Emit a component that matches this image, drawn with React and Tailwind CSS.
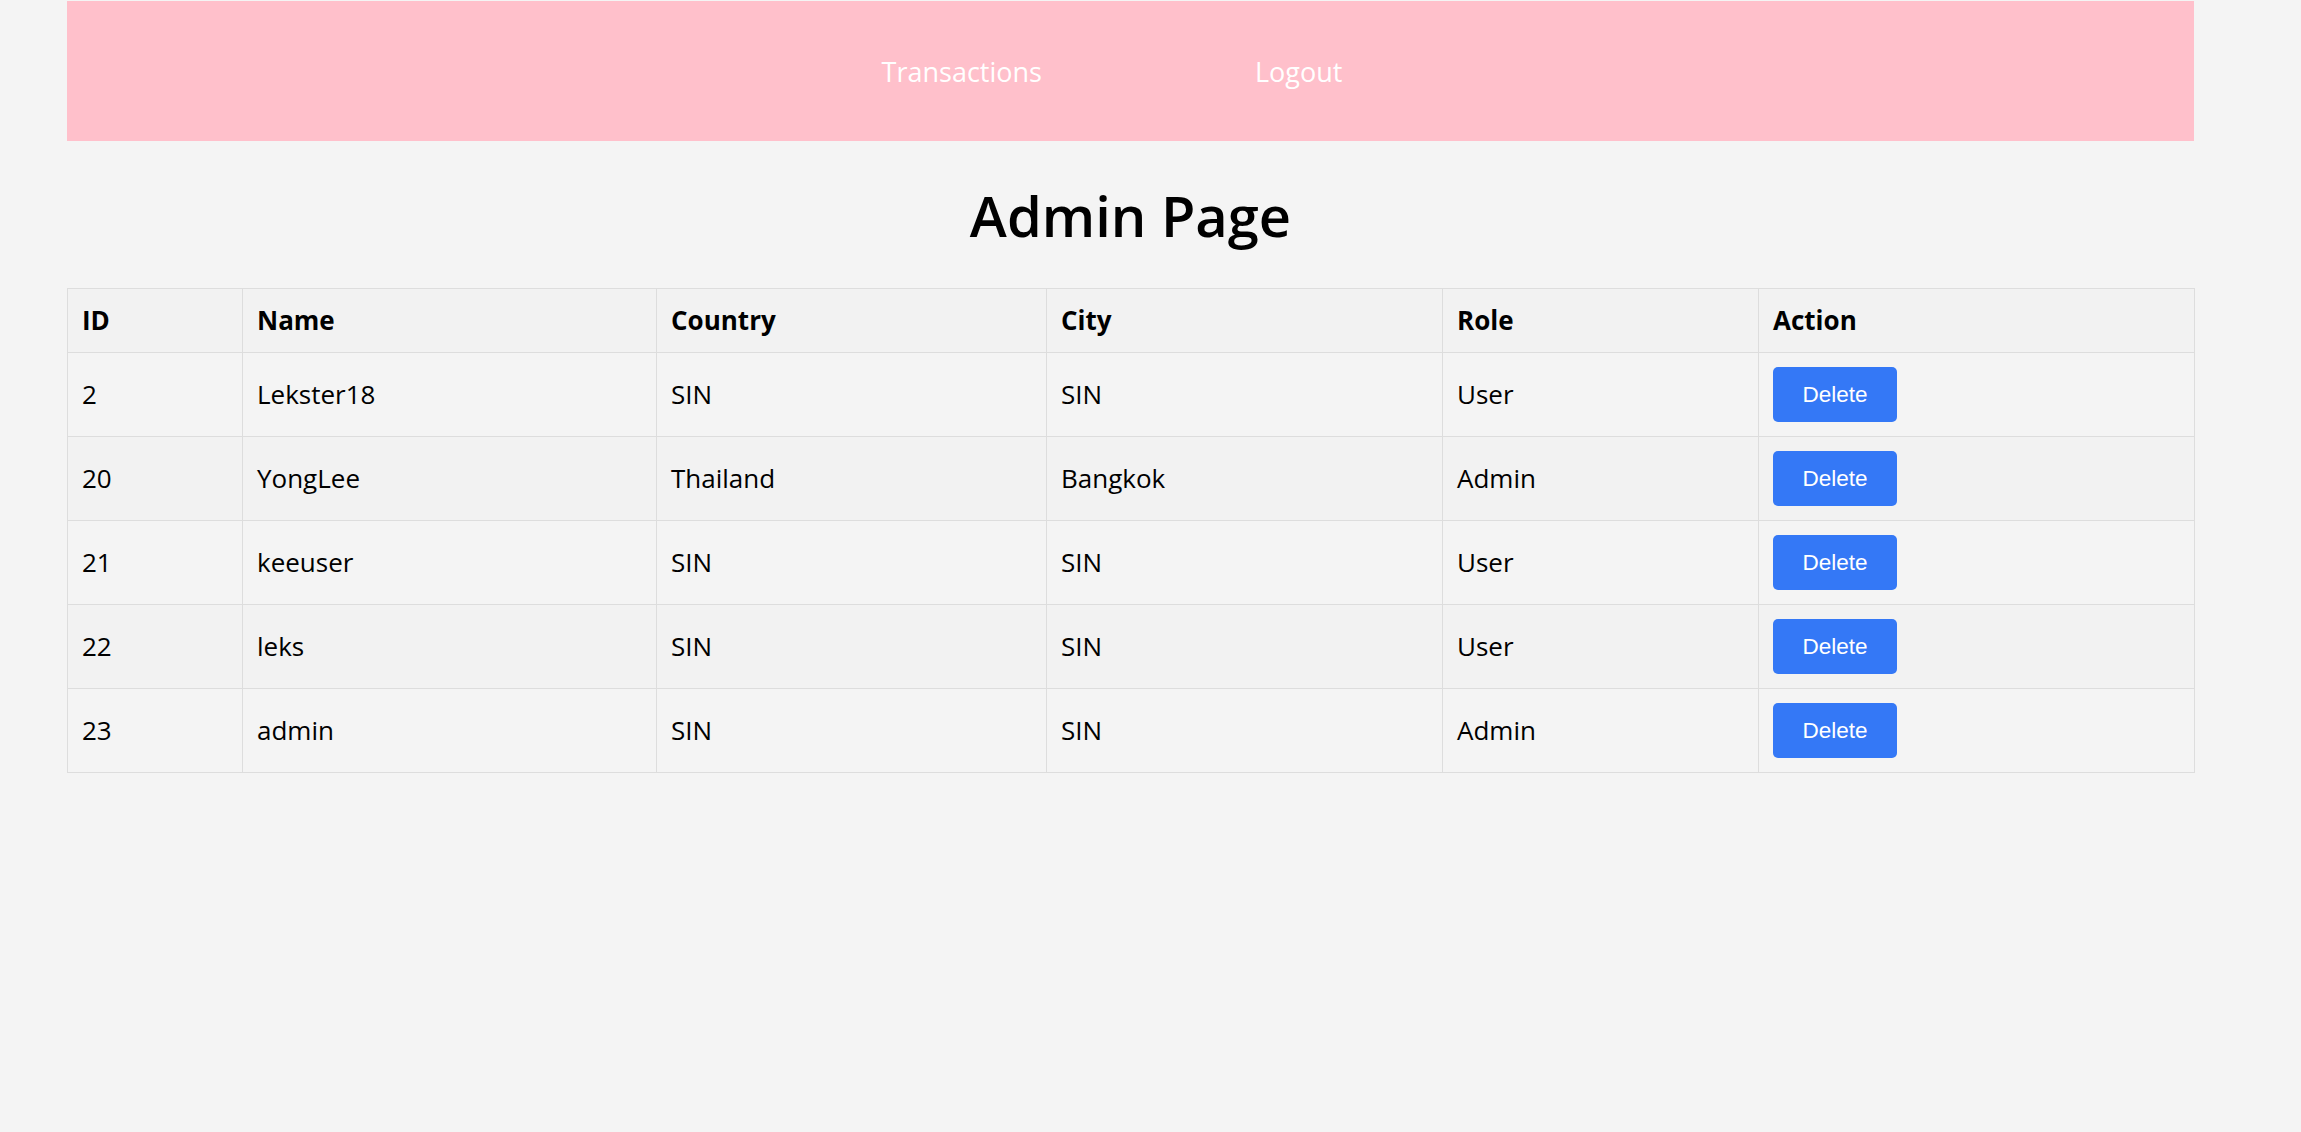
import React from "react";

const users = [
  { id: 2, name: "Lekster18", country: "SIN", city: "SIN", role: "User" },
  { id: 20, name: "YongLee", country: "Thailand", city: "Bangkok", role: "Admin" },
  { id: 21, name: "keeuser", country: "SIN", city: "SIN", role: "User" },
  { id: 22, name: "leks", country: "SIN", city: "SIN", role: "User" },
  { id: 23, name: "admin", country: "SIN", city: "SIN", role: "Admin" },
];

const headers = ["ID", "Name", "Country", "City", "Role", "Action"];

export default function App() {
  return (
    <div className="min-h-[1132px] bg-[#f4f4f4] text-black font-['Open_Sans',_'Noto_Sans',_sans-serif]">
      <div className="ml-[67px] w-[2127px] pt-px">
        <nav className="h-[140px] bg-[#ffc0cb] flex items-center justify-center gap-[213px] pr-[37px] text-[27px] text-white">
          <a href="#" className="leading-none">Transactions</a>
          <a href="#" className="leading-none">Logout</a>
        </nav>

        <div className="h-[147px] flex items-center justify-center">
          <h1 className="text-[56px] font-semibold leading-none">Admin Page</h1>
        </div>

        <table className="w-[2127px] table-fixed border-collapse border border-[#dddddd] text-[26px]">
          <colgroup>
            <col className="w-[175px]" />
            <col className="w-[414px]" />
            <col className="w-[390px]" />
            <col className="w-[396px]" />
            <col className="w-[316px]" />
            <col className="w-[436px]" />
          </colgroup>
          <thead>
            <tr className="bg-[#f2f2f2]">
              {headers.map((h) => (
                <th key={h} className="h-[64px] border border-[#dddddd] pl-[14px] text-left font-bold">
                  {h}
                </th>
              ))}
            </tr>
          </thead>
          <tbody>
            {users.map((u, i) => (
              <tr key={u.id} className={i % 2 === 1 ? "bg-[#f2f2f2]" : "bg-[#f4f4f4]"}>
                <td className="h-[84px] border border-[#dddddd] pl-[14px]">{u.id}</td>
                <td className="h-[84px] border border-[#dddddd] pl-[14px]">{u.name}</td>
                <td className="h-[84px] border border-[#dddddd] pl-[14px]">{u.country}</td>
                <td className="h-[84px] border border-[#dddddd] pl-[14px]">{u.city}</td>
                <td className="h-[84px] border border-[#dddddd] pl-[14px]">{u.role}</td>
                <td className="h-[84px] border border-[#dddddd] pl-[14px]">
                  <button className="w-[124px] h-[55px] rounded-[5px] bg-[#3478f6] text-white text-[22.5px] font-['Liberation_Sans',_Arial,_sans-serif]">
                    Delete
                  </button>
                </td>
              </tr>
            ))}
          </tbody>
        </table>
      </div>
    </div>
  );
}
